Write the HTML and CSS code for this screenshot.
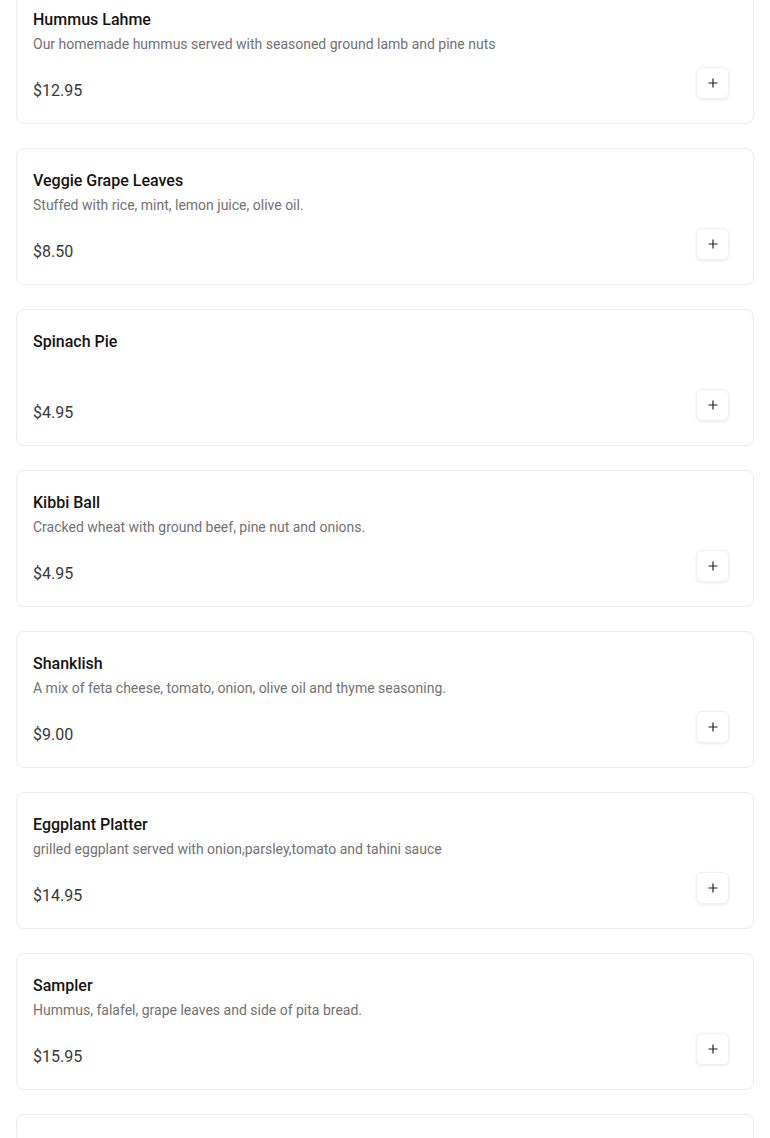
FILE: index.html
```html
<!doctype html>
<html lang="en">
    <head>
        <meta charset="utf-8">
        <meta name="viewport" content="width=device-width, initial-scale=1">
        <title>Menu</title>
        <link rel="stylesheet" href="styles.css">
    </head>
    <body>
        <div class="menu">
            <div class="item">
                <h3 class="item-name">Hummus Lahme</h3>
                <p class="item-desc">Our homemade hummus served with seasoned ground lamb and pine nuts</p>
                <div class="item-foot">
                    <span class="price">$12.95</span>
                    <button class="add" aria-label="Add"><svg width="10" height="10" viewBox="0 0 10 10"><path d="M5 0.5v9M0.5 5h9" stroke="#222" stroke-width="1.2"/></svg></button>
                </div>
            </div>
            <div class="item">
                <h3 class="item-name">Veggie Grape Leaves</h3>
                <p class="item-desc">Stuffed with rice, mint, lemon juice, olive oil.</p>
                <div class="item-foot">
                    <span class="price">$8.50</span>
                    <button class="add" aria-label="Add"><svg width="10" height="10" viewBox="0 0 10 10"><path d="M5 0.5v9M0.5 5h9" stroke="#222" stroke-width="1.2"/></svg></button>
                </div>
            </div>
            <div class="item">
                <h3 class="item-name">Spinach Pie</h3>
                <p class="item-desc"></p>
                <div class="item-foot">
                    <span class="price">$4.95</span>
                    <button class="add" aria-label="Add"><svg width="10" height="10" viewBox="0 0 10 10"><path d="M5 0.5v9M0.5 5h9" stroke="#222" stroke-width="1.2"/></svg></button>
                </div>
            </div>
            <div class="item">
                <h3 class="item-name">Kibbi Ball</h3>
                <p class="item-desc">Cracked wheat with ground beef, pine nut and onions.</p>
                <div class="item-foot">
                    <span class="price">$4.95</span>
                    <button class="add" aria-label="Add"><svg width="10" height="10" viewBox="0 0 10 10"><path d="M5 0.5v9M0.5 5h9" stroke="#222" stroke-width="1.2"/></svg></button>
                </div>
            </div>
            <div class="item">
                <h3 class="item-name">Shanklish</h3>
                <p class="item-desc">A mix of feta cheese, tomato, onion, olive oil and thyme seasoning.</p>
                <div class="item-foot">
                    <span class="price">$9.00</span>
                    <button class="add" aria-label="Add"><svg width="10" height="10" viewBox="0 0 10 10"><path d="M5 0.5v9M0.5 5h9" stroke="#222" stroke-width="1.2"/></svg></button>
                </div>
            </div>
            <div class="item">
                <h3 class="item-name">Eggplant Platter</h3>
                <p class="item-desc">grilled eggplant served with onion,parsley,tomato and tahini sauce</p>
                <div class="item-foot">
                    <span class="price">$14.95</span>
                    <button class="add" aria-label="Add"><svg width="10" height="10" viewBox="0 0 10 10"><path d="M5 0.5v9M0.5 5h9" stroke="#222" stroke-width="1.2"/></svg></button>
                </div>
            </div>
            <div class="item">
                <h3 class="item-name">Sampler</h3>
                <p class="item-desc">Hummus, falafel, grape leaves and side of pita bread.</p>
                <div class="item-foot">
                    <span class="price">$15.95</span>
                    <button class="add" aria-label="Add"><svg width="10" height="10" viewBox="0 0 10 10"><path d="M5 0.5v9M0.5 5h9" stroke="#222" stroke-width="1.2"/></svg></button>
                </div>
            </div>
            <div class="item is-empty"></div>
        </div>
    </body>
</html>
```

FILE: styles.css
```css
html {
    font-size: 16px;
    font-family: Roboto, "Liberation Sans", sans-serif;
}
body {
    margin: 0;
    background-color: #fff;
    color: #1a1a1a;
    overflow: hidden;
}
.menu {
    display: flex;
    flex-direction: column;
    gap: 24px;
    padding: 0 16px;
    margin-top: -13px;
}
.item {
    display: flex;
    flex-direction: column;
    border: 1px solid #ebebeb;
    border-radius: 8px;
    padding: 20px 24px 20px 16px;
}
.item.is-empty {
    height: 95px;
}
.item-name {
    font-size: 16px;
    font-weight: 500;
    line-height: 24px;
    margin: 0;
    color: #141414;
}
.item-desc {
    font-size: 14px;
    line-height: 24px;
    min-height: 24px;
    margin: 0;
    color: #727272;
}
.item-foot {
    display: flex;
    justify-content: space-between;
    align-items: flex-end;
    margin-top: 11px;
    height: 36px;
}
.price {
    font-size: 16px;
    line-height: 24px;
    color: #383838;
}
.add {
    width: 33px;
    height: 32px;
    margin-bottom: 4px;
    padding: 0;
    display: flex;
    align-items: center;
    justify-content: center;
    background-color: #fff;
    border: 1px solid #f0f0f0;
    border-radius: 6px;
    box-shadow: 0 1px 3px rgba(0, 0, 0, 0.08);
    cursor: pointer;
}
```
